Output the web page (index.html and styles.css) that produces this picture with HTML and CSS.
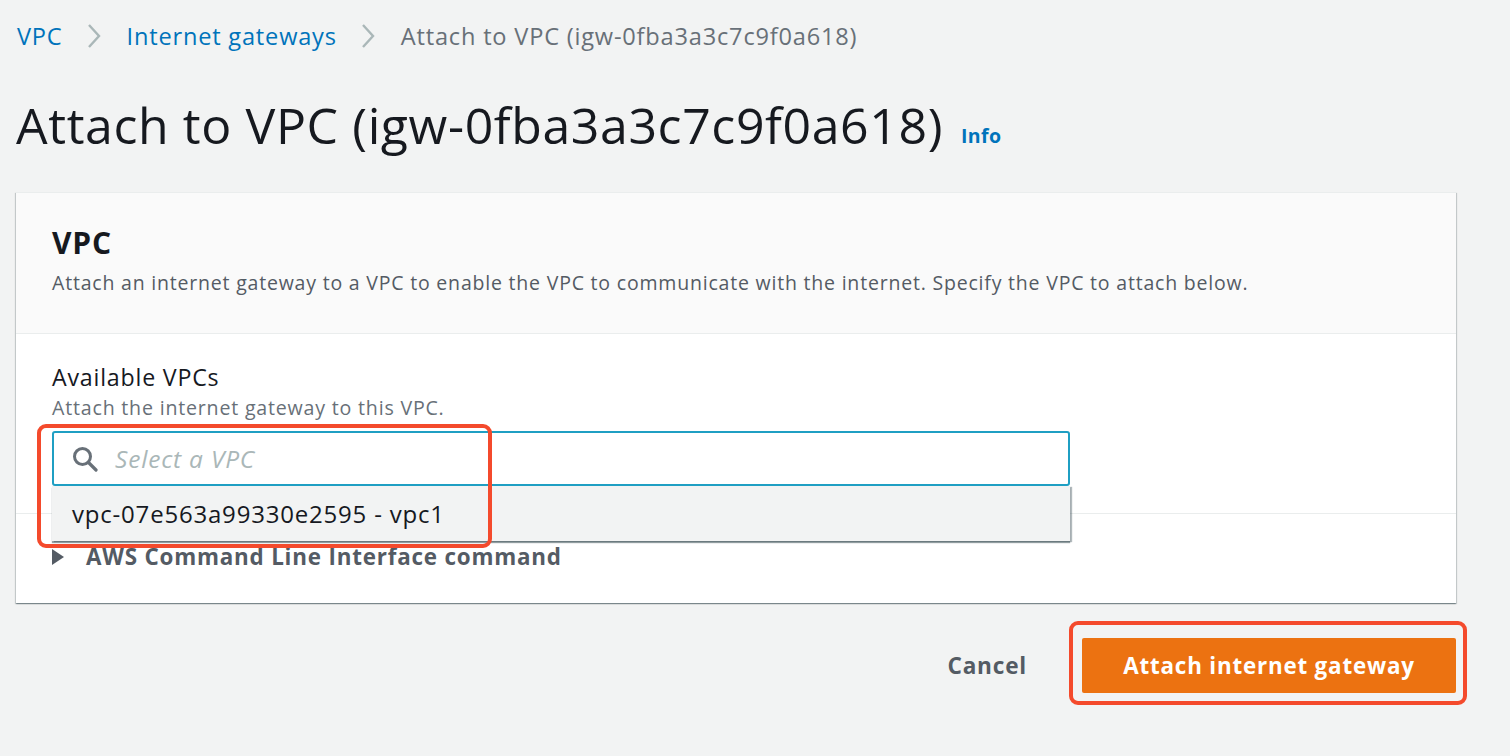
FILE: index.html
```html
<!DOCTYPE html>
<html>
<head>
<meta charset="utf-8">
<link rel="stylesheet" href="styles.css">
</head>
<body>
<div class="page">
  <nav class="crumbs">
    <a class="crumb-link">VPC</a>
    <svg class="chev" viewBox="0 0 14 26" width="14" height="26"><path d="M2 2 L12 13 L2 24" fill="none" stroke="#aab7b8" stroke-width="2.4"/></svg>
    <a class="crumb-link">Internet gateways</a>
    <svg class="chev" viewBox="0 0 14 26" width="14" height="26"><path d="M2 2 L12 13 L2 24" fill="none" stroke="#aab7b8" stroke-width="2.4"/></svg>
    <span class="crumb-current">Attach to VPC (igw-0fba3a3c7c9f0a618)</span>
  </nav>

  <div class="title-row">
    <h1 class="title">Attach to VPC (igw-0fba3a3c7c9f0a618)</h1>
    <a class="info">Info</a>
  </div>

  <div class="card">
    <div class="card-head">
      <h2 class="card-title">VPC</h2>
      <p class="card-desc">Attach an internet gateway to a VPC to enable the VPC to communicate with the internet. Specify the VPC to attach below.</p>
    </div>
    <div class="form-section">
      <div class="label">Available VPCs</div>
      <div class="hint">Attach the internet gateway to this VPC.</div>
      <div class="select-wrap">
        <div class="input">
          <svg class="search" viewBox="0 0 26 26" width="26" height="26"><circle cx="10.5" cy="10.5" r="8" fill="none" stroke="#687078" stroke-width="3"/><path d="M16.5 16.5 L24 24" stroke="#687078" stroke-width="3.2" stroke-linecap="round"/></svg>
          <span class="placeholder">Select a VPC</span>
        </div>
        <div class="dropdown">
          <div class="option">vpc-07e563a99330e2595 - vpc1</div>
        </div>
        <div class="mark mark-select"></div>
      </div>
    </div>
    <div class="expand">
      <svg class="tri" viewBox="0 0 12 16" width="12" height="16"><path d="M0 0 L12 8 L0 16 Z" fill="#545b64"/></svg>
      <span class="expand-text">AWS Command Line Interface command</span>
    </div>
  </div>

  <div class="actions">
    <a class="cancel">Cancel</a>
    <div class="btn-wrap">
      <button class="primary">Attach internet gateway</button>
      <div class="mark mark-btn"></div>
    </div>
  </div>
</div>
</body>
</html>
```

FILE: styles.css
```css
* { box-sizing: border-box; }
html, body {
  margin: 0;
  padding: 0;
  background: #f2f3f3;
  font-family: "Open Sans", "Liberation Sans", Arial, sans-serif;
  color: #16191f;
  letter-spacing: 0.8px;
}
.page {
  padding: 21px 54px 60px 16px;
}
.crumbs {
  display: flex;
  align-items: center;
  height: 30px;
  font-size: 23.6px;
  padding-left: 1px;
}
.crumb-link { color: #0073bb; }
.crumb-current { color: #687078; }
.chev { margin: 0 26px 0 24px; }
.title-row {
  display: flex;
  align-items: baseline;
  margin-top: 45px;
  height: 58px;
  margin-bottom: 38px;
}
.title {
  margin: 0;
  font-size: 50px;
  line-height: 58px;
  font-weight: 400;
  letter-spacing: 0.6px;
  color: #16191f;
  padding-left: 0;
}
.info {
  color: #0073bb;
  font-weight: 700;
  font-size: 19.5px;
  letter-spacing: 0.4px;
  margin-left: 18px;
  position: relative;
  top: -1px;
}
.card {
  background: #fff;
  box-shadow: 0 1px 1px 0 rgba(0,28,36,.3), 1px 1px 1px 0 rgba(0,28,36,.15), -1px 1px 1px 0 rgba(0,28,36,.15);
  border-top: 1px solid #eaeded;
}
.card-head {
  background: #fafafa;
  padding: 33px 36px 38px;
  border-bottom: 1px solid #eaeded;
}
.card-title {
  margin: 0;
  font-size: 30px;
  line-height: 34px;
  font-weight: 700;
}
.card-desc {
  margin: 11px 0 0;
  font-size: 19.5px;
  line-height: 24px;
  color: #545b64;
}
.form-section {
  padding: 30px 36px 27px;
  border-bottom: 1px solid #eaeded;
}
.label {
  font-size: 23.2px;
  line-height: 26px;
}
.hint {
  margin-top: 6px;
  font-size: 19.6px;
  line-height: 24px;
  color: #687078;
}
.select-wrap {
  position: relative;
  margin-top: 11px;
  width: 1018px;
}
.input {
  height: 55px;
  border: 2px solid #1f9fc3;
  border-radius: 3px;
  background: #fff;
  display: flex;
  align-items: center;
  padding-left: 18px;
}
.search { flex: none; }
.placeholder {
  margin-left: 17px;
  font-style: italic;
  color: #aab7b8;
  font-size: 24.5px;
}
.dropdown {
  position: absolute;
  left: 0;
  top: 55px;
  width: 100%;
  height: 55px;
  background: #f2f3f3;
  box-shadow: 0 2px 1px 0 rgba(0,28,36,.4), 2px 1px 1px 0 rgba(0,28,36,.3);
  z-index: 2;
}
.option {
  padding-left: 20px;
  line-height: 55px;
  font-size: 24px;
  color: #16191f;
}
.mark {
  position: absolute;
  border: 4px solid #f44a2c;
  border-radius: 9px;
  z-index: 3;
  pointer-events: none;
}
.mark-select {
  left: -15px;
  top: -7px;
  width: 455px;
  height: 124px;
}
.expand {
  display: flex;
  align-items: center;
  padding: 30px 36px 33px;
  height: 89px;
}
.tri { margin-right: 22px; }
.expand-text {
  font-size: 22.4px;
  font-weight: 700;
  color: #545b64;
  line-height: 26px;
}
.actions {
  display: flex;
  justify-content: flex-end;
  align-items: center;
  margin-top: 35px;
}
.cancel {
  font-size: 22.6px;
  font-weight: 700;
  color: #545b64;
  margin-right: 55px;
}
.btn-wrap { position: relative; }
.primary {
  display: block;
  width: 374px;
  height: 55px;
  border: none;
  border-radius: 2px;
  background: #ec7211;
  color: #fff;
  font-family: inherit;
  letter-spacing: inherit;
  font-size: 22.4px;
  font-weight: 700;
}
.mark-btn {
  left: -13px;
  top: -17px;
  width: 398px;
  height: 84px;
}
```
